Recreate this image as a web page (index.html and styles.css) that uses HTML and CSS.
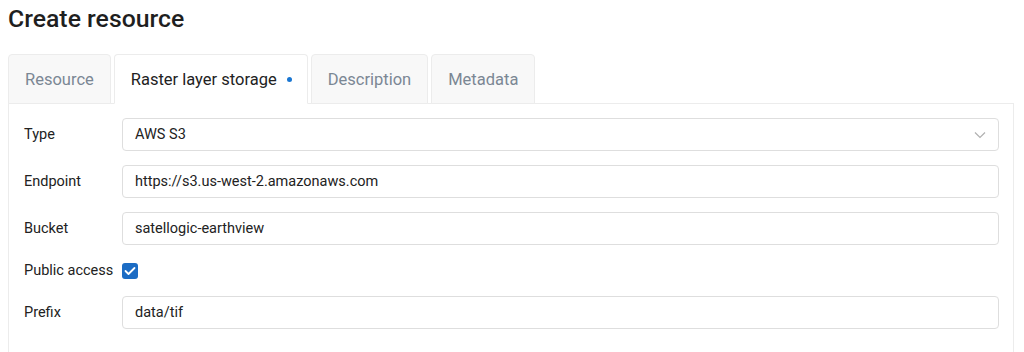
FILE: index.html
```html
<!DOCTYPE html>
<html lang="en">
<head>
    <meta charset="UTF-8">
    <meta name="viewport" content="width=device-width, initial-scale=1.0">
    <title>Create resource</title>
    <link rel="stylesheet" href="styles.css">
</head>
<body>
    <h1>Create resource</h1>

    <div class="tabs">
        <div class="tab">Resource</div>
        <div class="tab active">Raster layer storage <span class="dot"></span></div>
        <div class="tab">Description</div>
        <div class="tab">Metadata</div>
    </div>

    <div class="panel">
        <div class="row">
            <label>Type</label>
            <div class="field select">
                <span>AWS S3</span>
                <svg width="12" height="8" viewBox="0 0 12 8"><path d="M1 1.5 L6 6.5 L11 1.5" fill="none" stroke="#b0b0b0" stroke-width="1.2"/></svg>
            </div>
        </div>
        <div class="row">
            <label>Endpoint</label>
            <div class="field">https://s3.us-west-2.amazonaws.com</div>
        </div>
        <div class="row">
            <label>Bucket</label>
            <div class="field">satellogic-earthview</div>
        </div>
        <div class="row check-row">
            <label>Public access</label>
            <span class="checkbox">
                <svg width="12" height="10" viewBox="0 0 12 10"><path d="M1.5 5 L4.5 8 L10.5 2" fill="none" stroke="#fff" stroke-width="1.8" stroke-linecap="round" stroke-linejoin="round"/></svg>
            </span>
        </div>
        <div class="row">
            <label>Prefix</label>
            <div class="field">data/tif</div>
        </div>
    </div>
</body>
</html>
```

FILE: styles.css
```css
body {
    font-family: Roboto, "Liberation Sans", sans-serif;
    margin: 0;
    padding: 0 10px 0 8px;
    color: #222;
    background: #fff;
}
h1 {
    font-size: 24.8px;
    font-weight: 500;
    line-height: 28px;
    margin: 5px 0 21px 0;
    color: #1f1f1f;
}
.tabs {
    display: flex;
    gap: 3px;
    margin-bottom: -1px;
    position: relative;
    z-index: 1;
}
.tab {
    height: 48px;
    padding: 0 16px;
    display: flex;
    align-items: center;
    font-size: 16.5px;
    color: #7b8794;
    background: #f8f8f8;
    border: 1px solid #ececec;
    border-radius: 4px 4px 0 0;
}
.tab.active {
    color: #222;
    background: #fff;
    border-bottom-color: #fff;
    padding-right: 15px;
}
.dot {
    width: 5px;
    height: 5px;
    border-radius: 50%;
    background: #1976d2;
    margin-left: 10px;
}
.panel {
    border: 1px solid #ececec;
    padding: 14px 14px 40px 15px;
    display: flex;
    flex-direction: column;
    gap: 14px;
}
.row {
    display: flex;
    align-items: center;
}
.row label {
    width: 98px;
    font-size: 14.5px;
    color: #222;
}
.field {
    flex: 1;
    height: 31px;
    border: 1px solid #dedede;
    border-radius: 4px;
    padding: 0 12px;
    font-size: 14.5px;
    color: #222;
    display: flex;
    align-items: center;
}
.select {
    justify-content: space-between;
}
.check-row {
    height: 23px;
}
.checkbox {
    width: 16px;
    height: 16px;
    border-radius: 3px;
    background: #1c6cc4;
    display: flex;
    align-items: center;
    justify-content: center;
}
```
